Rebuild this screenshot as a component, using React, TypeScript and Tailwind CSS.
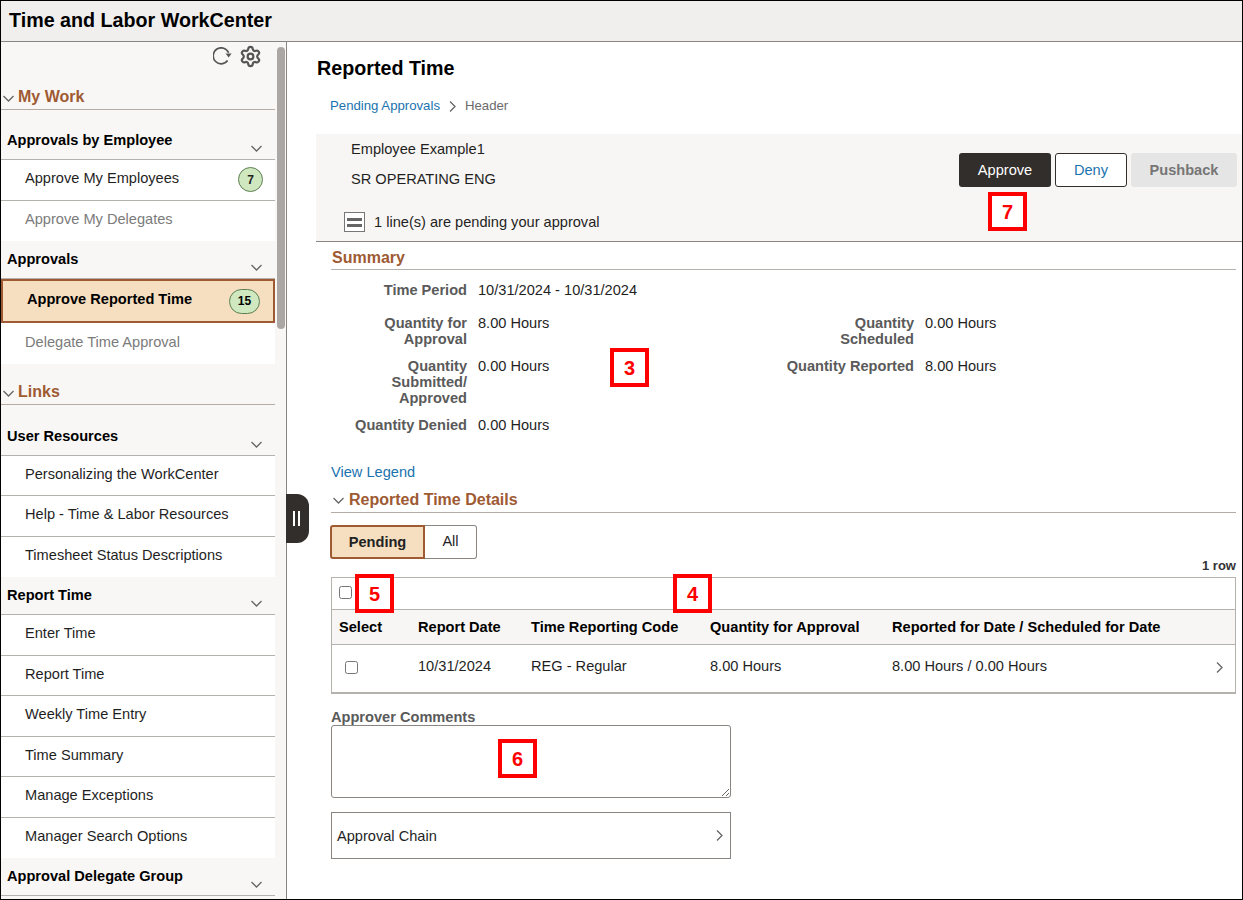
import { Settings } from "lucide-react";

function ChevDown({ className }: { className?: string }) {
  return (
    <svg width="11" height="7" viewBox="0 0 11 7" fill="none" stroke="#666" strokeWidth="1.3" className={className}>
      <path d="M0.5 1l5 5 5-5" />
    </svg>
  );
}

function ChevRight({ className }: { className?: string }) {
  return (
    <svg width="7" height="11" viewBox="0 0 7 11" fill="none" stroke="#666" strokeWidth="1.3" className={className}>
      <path d="M1 0.5l5 5-5 5" />
    </svg>
  );
}

function NavRow({ label, muted, badge, last }: { label: string; muted?: boolean; badge?: string; last?: boolean }) {
  return (
    <div className={`flex h-[40.5px] items-center justify-between bg-white pl-6 pr-3 ${last ? "" : "border-b border-[#b5b1ad]"}`}>
      <span className={`pb-[3px] ${muted ? "text-[#7b7b7b]" : "text-[#1f1f1f]"}`}>{label}</span>
      {badge && (
        <span className="flex h-[25px] w-[25px] items-center justify-center rounded-full border border-[#5e7f52] bg-[#cfe8c0] text-xs font-bold">
          {badge}
        </span>
      )}
    </div>
  );
}

function GroupHead({ label }: { label: string }) {
  return (
    <div className="relative flex h-[38px] items-end border-b border-[#b5b1ad] pb-[9px] pl-[6px] font-bold text-black">
      <span>{label}</span>
      <ChevDown className="absolute right-[13px] bottom-[7px]" />
    </div>
  );
}

function SectionHead({ label }: { label: string }) {
  return (
    <div className="flex h-[26px] items-start gap-1 border-b border-[#b5ada5] pt-[3px] pl-[2px]">
      <ChevDown className="mt-[8px] shrink-0" />
      <span className="text-base leading-[19px] font-bold text-[#9e5a33]">{label}</span>
    </div>
  );
}

function Callout({ n, className }: { n: string; className: string }) {
  return (
    <div className={`absolute flex h-[39px] w-[39px] items-center justify-center border-4 border-[#ff0000] bg-white text-xl font-bold text-[#ff0000] ${className}`}>
      {n}
    </div>
  );
}

function Label({ children }: { children: React.ReactNode }) {
  return <div className="text-right leading-4 font-bold text-[#5a5a5a]">{children}</div>;
}

export default function App() {
  return (
    <div className="relative flex h-[900px] w-[1243px] flex-col overflow-hidden border border-black bg-white font-['Liberation_Sans',Arial,sans-serif] text-[14.6px] leading-5 text-[#1f1f1f]">
      <div className="flex h-[41px] shrink-0 items-center border-b border-[#8a8580] bg-[#f0efee] pb-[2px] pl-2 text-[19.7px] font-bold text-black">
        Time and Labor WorkCenter
      </div>

      <div className="flex min-h-0 flex-1">
        <aside className="relative h-full w-[286px] shrink-0 overflow-hidden border-r border-[#8a8580] bg-[#f9f7f5]">
          <div className="w-[274px]">
            <div className="flex h-[26px] items-start justify-end gap-[6px] pt-[3px] pr-[13px]">
              <svg width="20" height="18" viewBox="0 0 20 18" fill="none" className="mt-[2px]">
                <path d="M14.6 13.6A8 8 0 1 1 15.6 5.8" stroke="#555" strokeWidth="1.7" />
                <path d="M12.6 6.6h6l-3 3.8z" fill="#555" />
              </svg>
              <Settings className="h-[23px] w-[23px] text-[#555]" strokeWidth={2.3} />
            </div>
            <div className="pt-[16px]">
              <SectionHead label="My Work" />
            </div>
            <div className="pt-[12px]">
              <GroupHead label="Approvals by Employee" />
              <NavRow label="Approve My Employees" badge="7" />
              <NavRow label="Approve My Delegates" muted last />
              <GroupHead label="Approvals" />
              <div className="flex h-[44px] items-center justify-between border-2 border-[#9e5a33] bg-[#f5dfc0] pr-[13px] pl-[24px] font-bold text-black">
                <span className="pb-[5px]">Approve Reported Time</span>
                <span className="flex h-[25px] w-[31px] items-center justify-center rounded-full border border-[#5e7f52] bg-[#cfe8c0] text-xs font-bold">
                  15
                </span>
              </div>
              <NavRow label="Delegate Time Approval" muted last />
            </div>
            <div className="pt-[15px]">
              <SectionHead label="Links" />
            </div>
            <div className="pt-[13px]">
              <GroupHead label="User Resources" />
              <NavRow label="Personalizing the WorkCenter" />
              <NavRow label="Help - Time & Labor Resources" />
              <NavRow label="Timesheet Status Descriptions" last />
              <GroupHead label="Report Time" />
              <NavRow label="Enter Time" />
              <NavRow label="Report Time" />
              <NavRow label="Weekly Time Entry" />
              <NavRow label="Time Summary" />
              <NavRow label="Manage Exceptions" />
              <NavRow label="Manager Search Options" last />
              <GroupHead label="Approval Delegate Group" />
            </div>
          </div>
          <div className="absolute top-[5px] left-[276px] h-[282px] w-[8px] rounded-full bg-[#aaa7a4]" />
        </aside>

        <main className="min-w-0 flex-1 pl-[29px]">
          <h1 className="pt-[14px] pl-px text-[19.7px] leading-[24px] font-bold text-black">Reported Time</h1>
          <div className="flex items-center gap-[9px] pt-[18px] pl-[14px] text-[13.2px] leading-[16px]">
            <span className="text-[#1a73ae]">Pending Approvals</span>
            <ChevRight />
            <span className="text-[#6b6b6b]">Header</span>
          </div>

          <section className="mt-[20px] flex h-[108px] justify-between border-b border-[#8a8580] bg-[#f8f6f4] pr-[5px]">
            <div className="pl-[35px]">
              <div className="pt-[7px] leading-4">Employee Example1</div>
              <div className="pt-[14px] leading-4">SR OPERATING ENG</div>
              <div className="flex items-center gap-[9px] pt-[25px]">
                <span className="ml-[-7px] flex h-5 w-[21px] flex-col items-center justify-center gap-[3px] border border-[#777] bg-white">
                  <span className="h-[3px] w-[15px] bg-[#666]" />
                  <span className="h-[3px] w-[15px] bg-[#666]" />
                </span>
                <span>1 line(s) are pending your approval</span>
              </div>
            </div>
            <div className="flex items-start gap-1 pt-[19px]">
              <button className="h-[34px] w-[92px] rounded-[3px] bg-[#322e2b] text-white">Approve</button>
              <button className="h-[34px] w-[72px] rounded-[3px] border border-[#322e2b] bg-white text-[#1a73ae]">Deny</button>
              <button className="h-[34px] w-[106px] rounded-[3px] bg-[#e5e5e5] font-bold text-[#767676]">Pushback</button>
            </div>
          </section>

          <div className="mt-[6px] mr-[6px] ml-[15px] border-b border-[#b5b1ad] pb-px pl-px text-base leading-[20px] font-bold text-[#9e5a33]">
            Summary
          </div>

          <div className="ml-[16px] grid grid-cols-[135px_82px_230px_135px_1fr] pt-[12px] leading-4">
            <Label>Time Period</Label>
            <div className="col-span-4 pl-[11px]">10/31/2024 - 10/31/2024</div>

            <div className="col-span-5 h-[17px]" />

            <Label>Quantity for Approval</Label>
            <div className="pl-[11px] whitespace-nowrap">8.00 Hours</div>
            <div />
            <Label>Quantity Scheduled</Label>
            <div className="pl-[11px] whitespace-nowrap">0.00 Hours</div>

            <div className="col-span-5 h-[11px]" />

            <Label>Quantity Submitted/ Approved</Label>
            <div className="pl-[11px] whitespace-nowrap">0.00 Hours</div>
            <div />
            <Label>Quantity Reported</Label>
            <div className="pl-[11px] whitespace-nowrap">8.00 Hours</div>

            <div className="col-span-5 h-[11px]" />

            <Label>Quantity Denied</Label>
            <div className="pl-[11px] whitespace-nowrap">0.00 Hours</div>
          </div>

          <div className="pt-[30px] pl-[15px] leading-[18px] text-[#1a73ae]">View Legend</div>

          <div className="mt-[8px] mr-[6px] ml-[15px] flex h-[24px] items-start gap-[5px] border-b border-[#b5ada5] pt-px pl-[2px]">
            <ChevDown className="mt-[7px] shrink-0" />
            <span className="text-base leading-[19px] font-bold text-[#9e5a33]">Reported Time Details</span>
          </div>

          <div className="mt-[12px] ml-[14px] flex h-[34px] w-[147px]">
            <div className="flex w-[95px] items-center justify-center rounded-l-[3px] border-2 border-[#9e5a33] bg-[#f5dfc0] font-bold text-[#222]">
              Pending
            </div>
            <div className="flex flex-1 items-center justify-center rounded-r-[3px] border border-l-0 border-[#8a8580] bg-white pb-0.5">
              All
            </div>
          </div>

          <div className="mr-[6px] h-[18px] pt-[1px] text-right text-[13px] leading-[12px] font-bold text-[#333]">1 row</div>

          <div className="mr-[6px] ml-[15px] border border-b-2 border-[#b5b1ad]">
            <div className="flex h-[32px] items-center border-b border-[#b5b1ad] pl-[7px]">
              <input type="checkbox" className="mt-[-2px] h-[13px] w-[13px]" readOnly />
            </div>
            <div className="grid h-[35px] grid-cols-[79px_113px_179px_182px_1fr] items-center border-b border-[#b5b1ad] bg-[#f8f6f4] pl-[7px] font-bold text-black">
              <div>Select</div>
              <div>Report Date</div>
              <div>Time Reporting Code</div>
              <div>Quantity for Approval</div>
              <div>Reported for Date / Scheduled for Date</div>
            </div>
            <div className="relative grid h-[47px] grid-cols-[79px_113px_179px_182px_1fr] items-center pb-[5px] pl-[7px]">
              <div className="pt-[3px] pl-[6px]">
                <input type="checkbox" className="block h-[13px] w-[13px]" readOnly />
              </div>
              <div>10/31/2024</div>
              <div>REG - Regular</div>
              <div>8.00 Hours</div>
              <div>8.00 Hours / 0.00 Hours</div>
              <ChevRight className="absolute top-[17px] right-[12px]" />
            </div>
          </div>

          <div className="ml-[15px] pt-[15px] leading-[16px] font-bold text-[#5a5a5a]">Approver Comments</div>
          <textarea className="ml-[15px] block h-[73px] w-[400px] rounded-[3px] border border-[#8a8580] bg-white" readOnly />
          <div className="mt-[14px] ml-[15px] flex h-[47px] w-[400px] items-center justify-between border border-[#8a8580] pr-[7px] pl-[5px]">
            <span>Approval Chain</span>
            <ChevRight />
          </div>
        </main>
      </div>

      <div className="absolute top-[493px] left-[285px] flex h-[49px] w-[23px] items-center justify-center gap-[3px] rounded-r-[12px] bg-[#322e2b] pr-[3px]">
        <span className="h-[15px] w-[2px] bg-white" />
        <span className="h-[15px] w-[2px] bg-white" />
      </div>

      <Callout n="3" className="top-[347px] left-[609px]" />
      <Callout n="4" className="top-[573px] left-[672px]" />
      <Callout n="5" className="top-[573px] left-[354px]" />
      <Callout n="6" className="top-[738px] left-[497px]" />
      <Callout n="7" className="top-[191px] left-[987px]" />
    </div>
  );
}
